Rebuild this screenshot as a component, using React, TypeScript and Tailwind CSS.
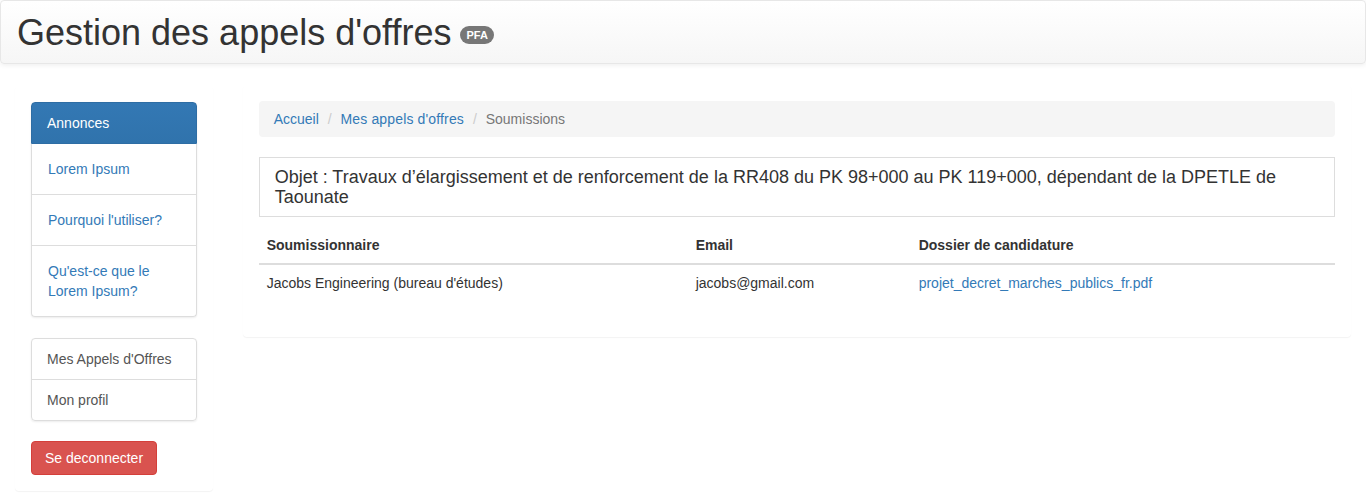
import React from 'react';

const sideLinks = ['Lorem Ipsum', "Pourquoi l'utiliser?", "Qu'est-ce que le Lorem Ipsum?"];

const App = () => {
  return (
    <div className="min-h-screen bg-white text-[14px] leading-[20px] text-[#333] font-['Liberation_Sans',Arial,sans-serif]">
      {/* Top header */}
      <header className="flex h-16 items-center rounded-[4px] border border-[#e7e7e7] bg-gradient-to-b from-white to-[#f6f6f6] px-4 pt-[2px] shadow-[0_1px_5px_rgba(0,0,0,0.075)]">
        <h1 className="flex items-center text-[36px] leading-[40px] font-normal text-[#333]">
          Gestion des appels d'offres
          <span className="ml-[9px] mt-[4px] rounded-[10px] bg-[#777] px-[6px] py-[3px] text-[11px] leading-[12px] font-bold text-white">
            PFA
          </span>
        </h1>
      </header>

      <div className="mt-[22px] flex">
        {/* Sidebar */}
        <aside className="w-1/6 px-[15px]">
          <div className="rounded-[4px] border border-transparent bg-white p-[15px] shadow-[0_1px_1px_rgba(0,0,0,0.05)]">
            <div className="mb-[21px] rounded-[4px] shadow-[0_1px_2px_rgba(0,0,0,0.075)]">
              <div className="rounded-t-[4px] border border-[#2e6da4] bg-gradient-to-b from-[#3378b4] to-[#3073ac] px-[15px] py-[10px] text-white">
                Annonces
              </div>
              <div className="rounded-b-[4px] border-x border-b border-[#ddd]">
                {sideLinks.map((label, i) => (
                  <div
                    key={label}
                    className={`px-[16px] py-[15px] text-[#337ab7] ${i > 0 ? 'border-t border-[#ddd]' : ''}`}
                  >
                    {label}
                  </div>
                ))}
              </div>
            </div>

            <div className="mb-[20px] rounded-[4px] border border-[#ddd] shadow-[0_1px_2px_rgba(0,0,0,0.075)]">
              <div className="px-[15px] py-[10px] text-[#555]">Mes Appels d'Offres</div>
              <div className="border-t border-[#ddd] px-[15px] py-[10px] text-[#555]">Mon profil</div>
            </div>

            <button className="rounded-[4px] border border-[#d43f3a] bg-[#d9534f] px-[13px] py-[6px] text-white">
              Se deconnecter
            </button>
          </div>
        </aside>

        {/* Main */}
        <main className="-mt-px w-5/6 px-[15px]">
          <div className="rounded-[4px] border border-transparent bg-white p-[15px] shadow-[0_1px_1px_rgba(0,0,0,0.05)]">
            <div className="mb-[20px] rounded-[4px] bg-[#f5f5f5] px-[15px] py-[8px]">
              <span className="text-[#337ab7]">Accueil</span>{' '}
              <span className="px-[5px] text-[#ccc]">/{'\u00a0'}</span>
              <span className="text-[#337ab7] tracking-[0.15px]">Mes appels d'offres</span>{' '}
              <span className="px-[5px] text-[#ccc]">/{'\u00a0'}</span>
              <span className="text-[#777]">Soumissions</span>
            </div>

            <div className="mb-[10px] border border-[#ddd] px-[15px] py-[9px] text-[18px] leading-[20px] text-[#333]">
              Objet : Travaux d’élargissement et de renforcement de la RR408 du PK 98+000 au PK 119+000, dépendant de la DPETLE de Taounate
            </div>

            <table className="mb-[20px] w-full border-collapse">
              <thead>
                <tr>
                  <th className="w-[429px] border-b-2 border-[#ddd] p-[8px] text-left font-bold">Soumissionnaire</th>
                  <th className="w-[223px] border-b-2 border-[#ddd] p-[8px] text-left font-bold">Email</th>
                  <th className="border-b-2 border-[#ddd] p-[8px] text-left font-bold">Dossier de candidature</th>
                </tr>
              </thead>
              <tbody>
                <tr>
                  <td className="border-t border-[#ddd] p-[8px]">Jacobs Engineering (bureau d'études)</td>
                  <td className="border-t border-[#ddd] p-[8px]">jacobs@gmail.com</td>
                  <td className="border-t border-[#ddd] p-[8px] text-[#337ab7]">projet_decret_marches_publics_fr.pdf</td>
                </tr>
              </tbody>
            </table>
          </div>
        </main>
      </div>
    </div>
  );
};

export default App;
